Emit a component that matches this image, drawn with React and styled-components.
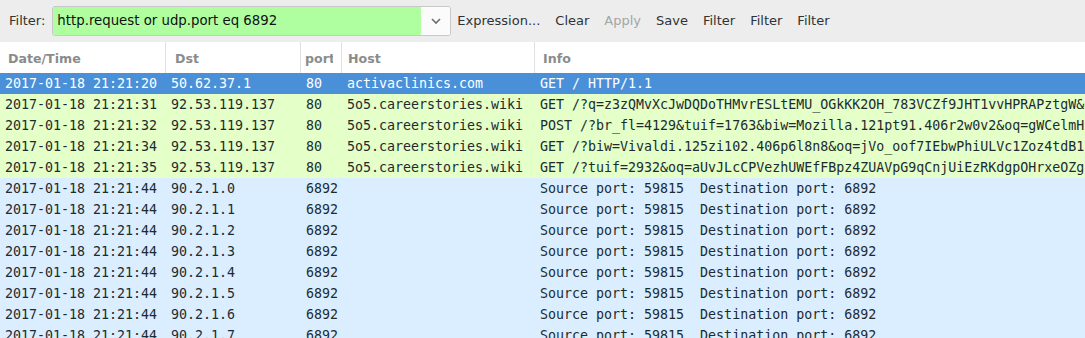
import React from 'react'
import styled, { createGlobalStyle } from 'styled-components'

const GlobalStyle = createGlobalStyle`
  body {
    margin: 0;
    background: #ffffff;
    font-family: "DejaVu Sans", sans-serif;
    overflow: hidden;
  }
`

const columns = [
  { key: 'time', title: 'Date/Time', width: 166, pad: 8 },
  { key: 'dst', title: 'Dst', width: 135, pad: 9 },
  { key: 'port', title: 'port', width: 41, pad: 4 },
  { key: 'host', title: 'Host', width: 193, pad: 6 },
  { key: 'info', title: 'Info', width: 550, pad: 8 },
]

const httpRows = [
  ['2017-01-18 21:21:31', '92.53.119.137', '80', '5o5.careerstories.wiki', 'GET /?q=z3zQMvXcJwDQDoTHMvrESLtEMU_OGkKK2OH_783VCZf9JHT1vvHPRAPztgW&'],
  ['2017-01-18 21:21:32', '92.53.119.137', '80', '5o5.careerstories.wiki', 'POST /?br_fl=4129&tuif=1763&biw=Mozilla.121pt91.406r2w0v2&oq=gWCelmHj'],
  ['2017-01-18 21:21:34', '92.53.119.137', '80', '5o5.careerstories.wiki', 'GET /?biw=Vivaldi.125zi102.406p6l8n8&oq=jVo_oof7IEbwPhiULVc1Zoz4tdB1'],
  ['2017-01-18 21:21:35', '92.53.119.137', '80', '5o5.careerstories.wiki', 'GET /?tuif=2932&oq=aUvJLcCPVezhUWEfFBpz4ZUAVpG9qCnjUiEzRKdgpOHrxeOZg'],
]

const rows = [
  { kind: 'selected', cells: ['2017-01-18 21:21:20', '50.62.37.1', '80', 'activaclinics.com', 'GET / HTTP/1.1'] },
  ...httpRows.map(cells => ({ kind: 'http', cells })),
  ...[0, 1, 2, 3, 4, 5, 6, 7].map(n => ({
    kind: 'udp',
    cells: ['2017-01-18 21:21:44', `90.2.1.${n}`, '6892', '', 'Source port: 59815  Destination port: 6892'],
  })),
]

const App = () => {
  return (
    <Window>
      <GlobalStyle />
      <Toolbar>
        <FilterLabel>Filter:</FilterLabel>
        <Combo>
          <FilterInput>http.request or udp.port eq 6892</FilterInput>
          <DropButton>
            <svg width="12" height="8" viewBox="0 0 12 8">
              <path d="M2 2 L6 6 L10 2" fill="none" stroke="#6a6e6f" strokeWidth="1.6" />
            </svg>
          </DropButton>
        </Combo>
        <Buttons>
          <ToolButton>Expression...</ToolButton>
          <ToolButton>Clear</ToolButton>
          <ToolButton disabled>Apply</ToolButton>
          <ToolButton>Save</ToolButton>
          <ToolButton>Filter</ToolButton>
          <ToolButton>Filter</ToolButton>
          <ToolButton>Filter</ToolButton>
        </Buttons>
      </Toolbar>
      <Table>
        <HeaderRow>
          {columns.map(c => (
            <HeaderCell key={c.key} $width={c.width}>
              <HeaderText $pad={c.pad}>{c.title}</HeaderText>
            </HeaderCell>
          ))}
        </HeaderRow>
        {rows.map((r, i) => (
          <Row key={i} $kind={r.kind}>
            {r.cells.map((text, j) => (
              <Cell key={j} $width={columns[j].width}>{text}</Cell>
            ))}
          </Row>
        ))}
      </Table>
    </Window>
  )
}

const Window = styled.div`
  width: 1085px;
  height: 338px;
  overflow: hidden;
  background: #ffffff;
`

const Toolbar = styled.div`
  height: 42px;
  background: #ededed;
  display: flex;
  align-items: center;
  padding-left: 9px;
  box-sizing: border-box;
  font-size: 13px;
  color: #2e3436;
`

const FilterLabel = styled.span`
  margin-right: 7px;
  margin-top: -1px;
`

const Combo = styled.div`
  display: flex;
  width: 399px;
  height: 30px;
  margin-top: -1px;
  border: 1px solid #c8c8c8;
  border-radius: 3px;
  overflow: hidden;
  box-sizing: border-box;
  margin-right: 6px;
`

const FilterInput = styled.div`
  flex: 1;
  background: #afffa0;
  color: #101010;
  font-size: 13.3px;
  display: flex;
  align-items: center;
  padding-left: 4px;
`

const DropButton = styled.div`
  width: 29px;
  background: #fbfbfb;
  display: flex;
  align-items: center;
  justify-content: center;
`

const Buttons = styled.div`
  display: flex;
  gap: 15px;
  margin-top: -1px;
`

const ToolButton = styled.span`
  color: ${p => (p.disabled ? '#a3a6a6' : '#2e3436')};
`

const Table = styled.div`
  display: flex;
  flex-direction: column;
`

const HeaderRow = styled.div`
  display: flex;
  height: 31px;
  background: #ffffff;
`

const HeaderCell = styled.div`
  width: ${p => p.$width}px;
  flex-shrink: 0;
  box-sizing: border-box;
  display: flex;
  align-items: center;
  border-right: 1px solid #e0e0e0;
  padding-right: 8px;
  padding-top: 1px;
  overflow: hidden;
  &:last-child { border-right: none; }
`

const HeaderText = styled.span`
  padding-left: ${p => p.$pad}px;
  font-size: 12.6px;
  font-weight: bold;
  color: #8a8c8c;
  white-space: nowrap;
  overflow: hidden;
`

const rowBg = {
  selected: '#4a90d9',
  http: '#e4ffc7',
  udp: '#daeeff',
}

const Row = styled.div`
  display: flex;
  height: 21px;
  background: ${p => rowBg[p.$kind]};
  color: ${p => (p.$kind === 'selected' ? '#ffffff' : '#1d2b2f')};
  font-family: "DejaVu Sans Mono", monospace;
  font-size: 13.3px;
`

const Cell = styled.div`
  width: ${p => p.$width}px;
  flex-shrink: 0;
  box-sizing: border-box;
  padding-left: 5px;
  white-space: pre;
  overflow: hidden;
  display: flex;
  align-items: center;
`

export default App
